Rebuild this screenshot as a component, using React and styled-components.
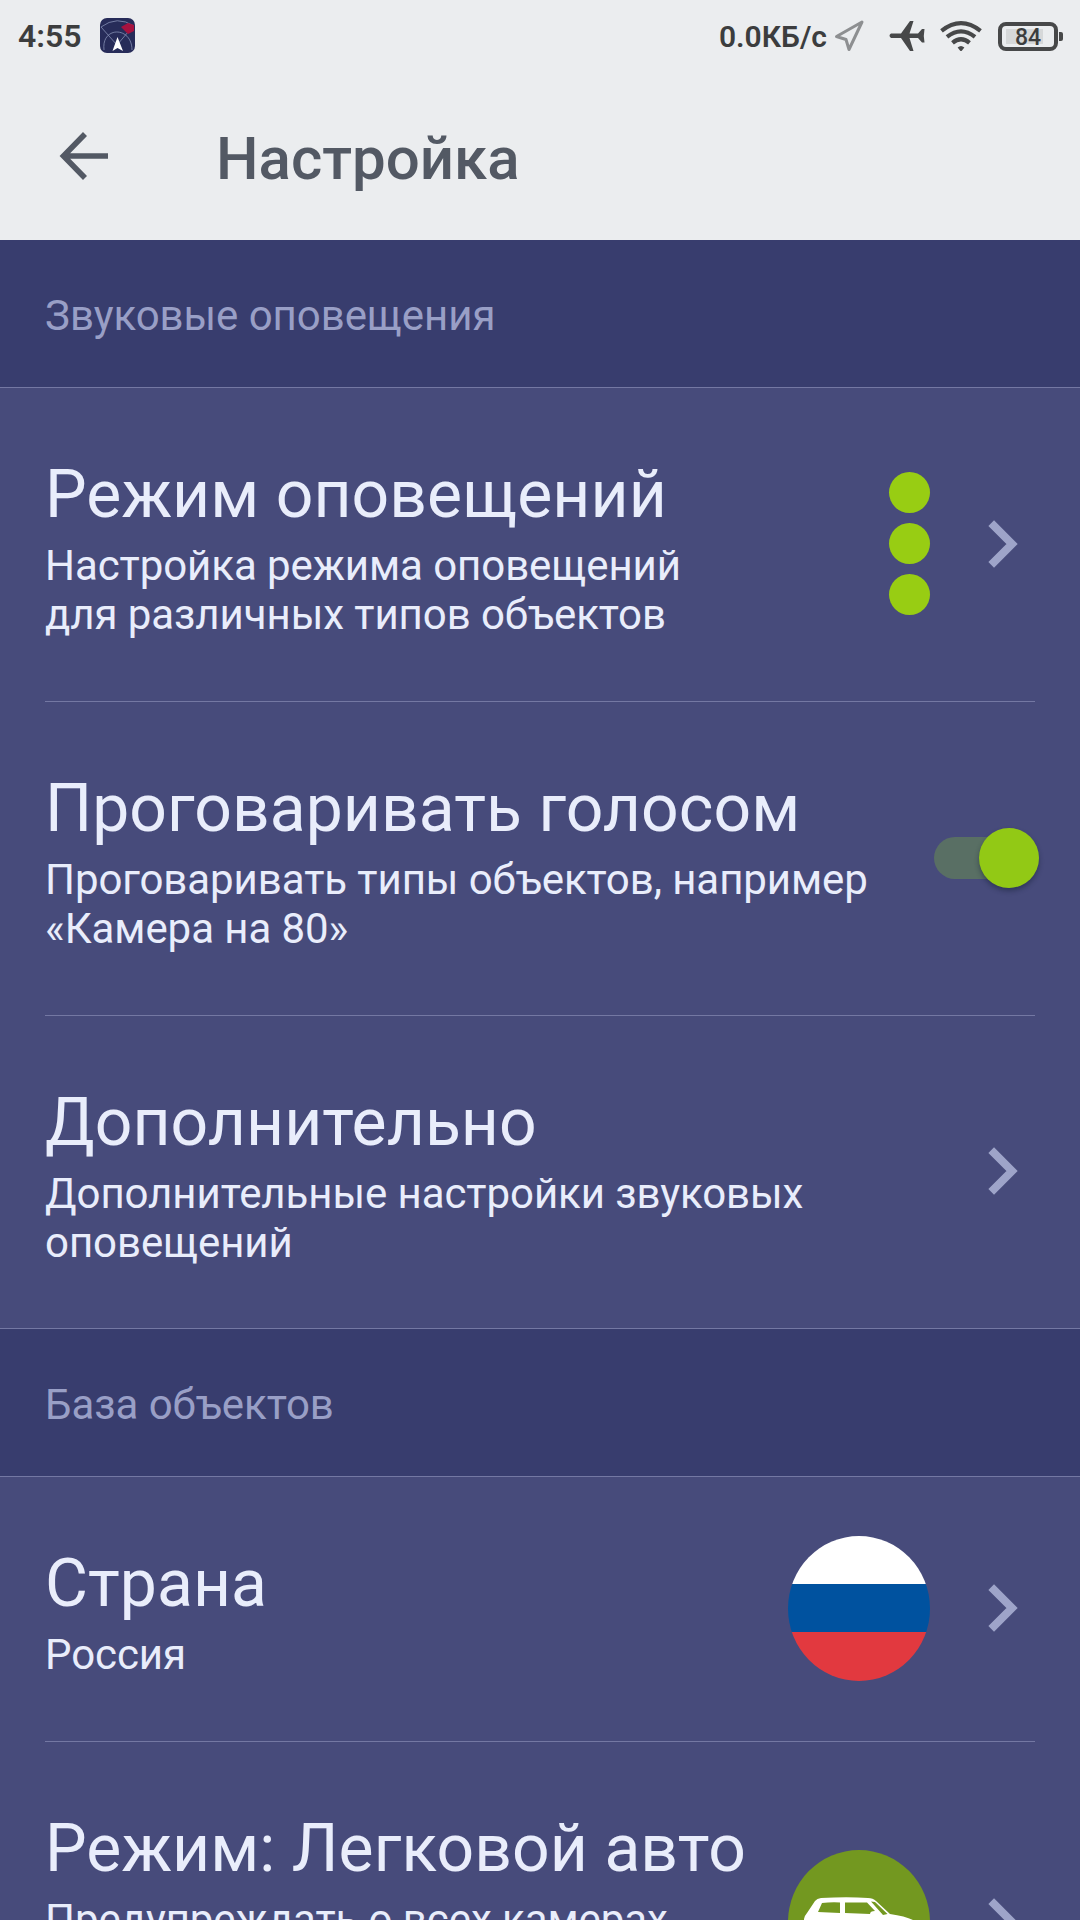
import React from "react";
import styled, { createGlobalStyle } from "styled-components";

const GlobalStyle = createGlobalStyle`
  * {
    box-sizing: border-box;
  }
  body {
    margin: 0;
    overflow: hidden;
    font-family: Roboto, "Noto Sans", sans-serif;
    background: #474b7b;
  }
`;

const Chevron = () => (
  <ChevronIcon width='32' height='50' viewBox='0 0 32 50'>
    <path d='M4.2 4.2 L25 25 L4.2 45.8' fill='none' stroke='#9ea4c9' strokeWidth='8' />
  </ChevronIcon>
);

const StatusIcons = () => (
  <>
    <svg width='30' height='32' viewBox='0 0 30 32'>
      <path
        d='M28 2 L2.5 16.5 L12 19.5 L15 29.5 Z'
        fill='none'
        stroke='#8d8f91'
        strokeWidth='3'
        strokeLinejoin='round'
      />
    </svg>
    <Plane width='36' height='32' viewBox='0 0 36 32'>
      <path
        d='M2 13.6 H12 L21 1 H24.5 L20.5 13.6 H29 L33 9 H35.5 L34.8 16 L35.5 22.5 H33 L29 18 H20.5 L24.5 31 H21 L12 18 H2 Q-1 15.8 2 13.6 Z'
        fill='#474849'
      />
    </Plane>
    <Wifi width='42' height='32' viewBox='0 0 42 32'>
      <g fill='none' stroke='#474849' strokeWidth='4.2'>
        <path d='M1.5 10.8 Q21 -4.6 40.5 10.8' />
        <path d='M7 16.8 Q21 5.8 35 16.8' />
        <path d='M12.5 22.8 Q21 15.6 29.5 22.8' />
      </g>
      <path d='M17.6 27.4 Q21 24.4 24.4 27.4 L22 30.4 Q21 31.4 20 30.4 Z' fill='#474849' />
    </Wifi>
  </>
);

const CarIcon = () => (
  <svg width='142' height='144' viewBox='0 0 142 144'>
    <ellipse cx='71' cy='72' rx='71' ry='72' fill='#739820' />
    <path
      d='M16 84 V69 Q17 65 19 63 L27 51 Q29 48.5 33 48 Q60 46.5 80 48 Q85 48 88 51 L102 64 Q117 66 125 70 V84 Z'
      fill='#fff'
    />
    <path
      d='M34 53 Q43 52 52 52.5 V63 L30 62 Z M57 52.5 H79 L87 61 Q82 61 82 64 L57 63 Z M83 51.5 L87 52 L99.5 64 L95 65 Z'
      fill='#739820'
    />
  </svg>
);

const SettingRow = ({ title, text, height, inset, children }) => (
  <Row $height={height}>
    <RowContent $line={inset}>
      <RowText>
        <h2>{title}</h2>
        <p>{text}</p>
      </RowText>
      <RowAction>{children}</RowAction>
    </RowContent>
  </Row>
);

const App = () => {
  return (
    <Screen>
      <GlobalStyle />
      <StatusBar>
        <Clock>4:55</Clock>
        <AppBadge width='36' height='36' viewBox='0 0 36 36'>
          <rect width='35' height='35' rx='7' fill='#272c59' />
          <g fill='none' stroke='#8790b5' strokeWidth='0.8'>
            <path d='M1 9 Q17 -3 34 8 M4 32 C1 8 32 8 32 32 M1 9 L17 27 L34 7' />
          </g>
          <path d='M21 9 L28 5 L34 7 V13 L28 16 Z' fill='#a8123f' />
          <path d='M17.5 19 L23 33 L17.5 30 L12.5 33 Z' fill='#fff' />
        </AppBadge>
        <StatusRight>
          <Speed>0.0КБ/с</Speed>
          <StatusIcons />
          <Battery>
            <BatteryLevel>84</BatteryLevel>
          </Battery>
        </StatusRight>
      </StatusBar>
      <Header>
        <svg width='50' height='50' viewBox='0 0 50 50'>
          <path
            d='M49 25 H5 M26 3 L4.5 25 L26 47'
            fill='none'
            stroke='#535964'
            strokeWidth='5.6'
          />
        </svg>
        <h1>Настройка</h1>
      </Header>

      <SectionTitle>Звуковые оповещения</SectionTitle>
      <SettingRow
        title='Режим оповещений'
        text={<>Настройка режима оповещений<br />для различных типов объектов</>}
        height={314}
        inset
      >
        <Dots>
          <i />
          <i />
          <i />
        </Dots>
        <Chevron />
      </SettingRow>
      <SettingRow
        title='Проговаривать голосом'
        text={<>Проговаривать типы объектов, например<br />«Камера на 80»</>}
        height={314}
        inset
      >
        <Switch>
          <span />
        </Switch>
      </SettingRow>
      <SettingRow
        title='Дополнительно'
        text={<>Дополнительные настройки звуковых<br />оповещений</>}
        height={312}
      >
        <Chevron />
      </SettingRow>

      <SectionTitle $top>База объектов</SectionTitle>
      <SettingRow title='Страна' text='Россия' height={265} inset>
        <Flag />
        <Chevron />
      </SettingRow>
      <SettingRow
        title='Режим: Легковой авто'
        text='Предупреждать о всех камерах'
        height={362}
      >
        <CarIcon />
        <Chevron />
      </SettingRow>
    </Screen>
  );
};

const Screen = styled.div`
  width: 1080px;
  height: 1920px;
  overflow: hidden;
  display: flex;
  flex-direction: column;
  background: #474b7b;
`;

const StatusBar = styled.div`
  flex: none;
  display: flex;
  align-items: center;
  height: 72px;
  padding: 0 17px 0 18px;
  background: #ebedef;
  color: #3c3d3e;
`;

const Clock = styled.span`
  width: 82px;
  font-size: 32px;
  font-weight: 600;
`;

const AppBadge = styled.svg`
  flex: none;
  display: block;
`;

const StatusRight = styled.div`
  display: flex;
  align-items: center;
  margin-left: auto;
`;

const Speed = styled.span`
  margin-right: 7px;
  font-size: 30px;
  font-weight: 600;
`;

const Plane = styled.svg`
  margin-left: 25px;
`;

const Wifi = styled.svg`
  margin: 0 16px 0 15px;
`;

const Battery = styled.div`
  display: flex;
  align-items: center;

  &::after {
    content: "";
    width: 4px;
    height: 9px;
    margin-left: 1px;
    border-radius: 0 2px 2px 0;
    background: #474849;
  }
`;

const BatteryLevel = styled.span`
  width: 60px;
  height: 29px;
  border: 4px solid #474849;
  border-radius: 8px;
  background: linear-gradient(90deg, #d6d8d9 84%, #ebedef 84%) 4px 3px / 44px 15px
    no-repeat;
  font-size: 23px;
  font-weight: 500;
  line-height: 23px;
  text-align: center;
`;

const Header = styled.header`
  flex: none;
  display: flex;
  align-items: center;
  height: 168px;
  padding-left: 59px;
  background: #ebedef;
  color: #535964;

  h1 {
    margin: 6px 0 0 107px;
    font-size: 60px;
    font-weight: 500;
    line-height: 70px;
  }
`;

const SectionTitle = styled.div`
  flex: none;
  height: ${props => (props.$top ? "149px" : "148px")};
  padding-left: 45px;
  border-top: ${props => (props.$top ? "1px solid #7478a3" : "none")};
  border-bottom: 1px solid #7478a3;
  background: #383d6e;
  color: #999fc6;
  font-size: 42px;
  letter-spacing: -0.05px;
  line-height: 152px;
`;

const Row = styled.section`
  flex: none;
  height: ${props => props.$height}px;
  padding: 0 45px;
`;

const RowContent = styled.div`
  display: flex;
  justify-content: space-between;
  height: 100%;
  border-bottom: ${props => (props.$line ? "1px solid #7478a3" : "none")};
`;

const RowText = styled.div`
  padding-top: 68px;
  color: #e9edfb;
  white-space: nowrap;

  h2 {
    margin: 0;
    font-size: 66px;
    font-weight: 400;
    letter-spacing: 0.08px;
    line-height: 77px;
  }
  p {
    margin: 8px 0 0;
    font-size: 42px;
    letter-spacing: -0.07px;
    line-height: 49px;
  }
`;

const RowAction = styled.div`
  display: flex;
  align-items: center;
  padding-bottom: 2px;
`;

const ChevronIcon = styled.svg`
  margin: 0 16px 0 57px;
`;

const Dots = styled.div`
  display: flex;
  flex-direction: column;
  gap: 10px;

  i {
    width: 41px;
    height: 41px;
    border-radius: 50%;
    background: #98cd13;
  }
`;

const Switch = styled.div`
  display: flex;
  align-items: center;
  justify-content: flex-end;
  width: 105px;
  height: 42px;
  margin-right: -4px;
  border-radius: 21px;
  background: #596f64;

  span {
    width: 60px;
    height: 60px;
    border-radius: 50%;
    background: #92c915;
    box-shadow: 0 3px 5px rgba(20, 30, 50, 0.45);
  }
`;

const Flag = styled.div`
  width: 142px;
  height: 145px;
  border-radius: 50%;
  background: linear-gradient(#fff 48px, #00529f 48px 96px, #e2393f 96px);
`;

export default App;
